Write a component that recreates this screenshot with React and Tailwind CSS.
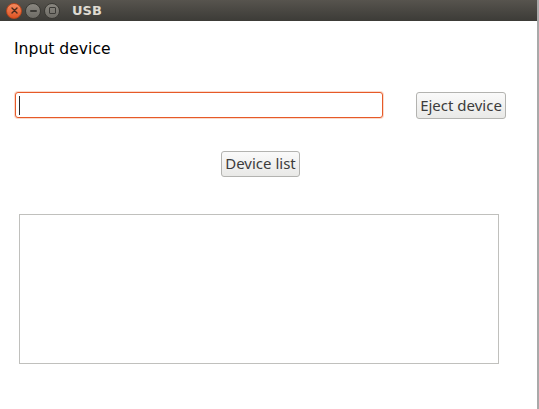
import React from "react";

export default function App() {
  return (
    <div className="w-[539px] h-[409px] flex bg-white overflow-hidden">
      <div className="w-[537px] flex flex-col">
        {/* Title bar */}
        <div className="h-[21px] flex items-center bg-gradient-to-b from-[#57544e] to-[#3c3b37]">
          <div className="ml-[6px] flex gap-[3px]">
            <div className="w-[16px] h-[16px] rounded-full bg-gradient-to-b from-[#f58a5e] to-[#de5422] border border-[#b9461c] flex items-center justify-center">
              <svg width="7" height="7" viewBox="0 0 7 7">
                <path d="M1 1L6 6M6 1L1 6" stroke="#4a2a1c" strokeWidth="1.4" strokeLinecap="round" />
              </svg>
            </div>
            <div className="w-[16px] h-[16px] rounded-full bg-gradient-to-b from-[#8a8780] to-[#6e6c66] border border-[#3a3934] flex items-center justify-center">
              <div className="w-[7px] h-[2px] bg-[#3c3b37] rounded-sm" />
            </div>
            <div className="w-[16px] h-[16px] rounded-full bg-gradient-to-b from-[#8a8780] to-[#6e6c66] border border-[#3a3934] flex items-center justify-center">
              <div className="w-[7px] h-[7px] border-[1.5px] border-[#3c3b37] rounded-[1px]" />
            </div>
          </div>
          <span className="ml-[12px] text-[13px] font-bold text-[#dfdbd2] leading-none font-['DejaVu_Sans',sans-serif]">
            USB
          </span>
        </div>

        {/* Body */}
        <div className="flex-1 flex flex-col items-start">
          <div className="mt-[18px] ml-[14px] h-[20px] text-[15.6px] leading-[20px] text-black font-['DejaVu_Sans',sans-serif]">
            Input device
          </div>

          <div className="mt-[33px] flex items-start">
            <div className="ml-[15px] w-[368px] h-[26px] rounded-[3px] border border-[#e65a28] shadow-[0_0_0_1px_rgba(240,150,110,0.35)] bg-white flex items-center">
              <div className="ml-[3px] w-[1px] h-[19px] bg-[#2a2a2a]" />
            </div>
            <button className="ml-[33px] w-[90px] h-[27px] rounded-[3px] border border-[#b3b3b0] bg-gradient-to-b from-[#fafafa] to-[#e9e9e7] text-[15px] leading-none text-[#3c3c3c] font-['Noto_Sans',sans-serif] flex items-center justify-center pb-[1px]">
              Eject device
            </button>
          </div>

          <button className="mt-[32px] ml-[221px] w-[79px] h-[26px] rounded-[3px] border border-[#b3b3b0] bg-gradient-to-b from-[#fafafa] to-[#e9e9e7] text-[15px] leading-none text-[#3c3c3c] font-['Noto_Sans',sans-serif] flex items-center justify-center pb-[1px]">
            Device list
          </button>

          <div className="mt-[37px] ml-[19px] w-[480px] h-[150px] border border-[#c0c0bd] bg-white" />
        </div>
      </div>
      <div className="w-[2px] h-full bg-[#a9a9a9]" />
    </div>
  );
}
